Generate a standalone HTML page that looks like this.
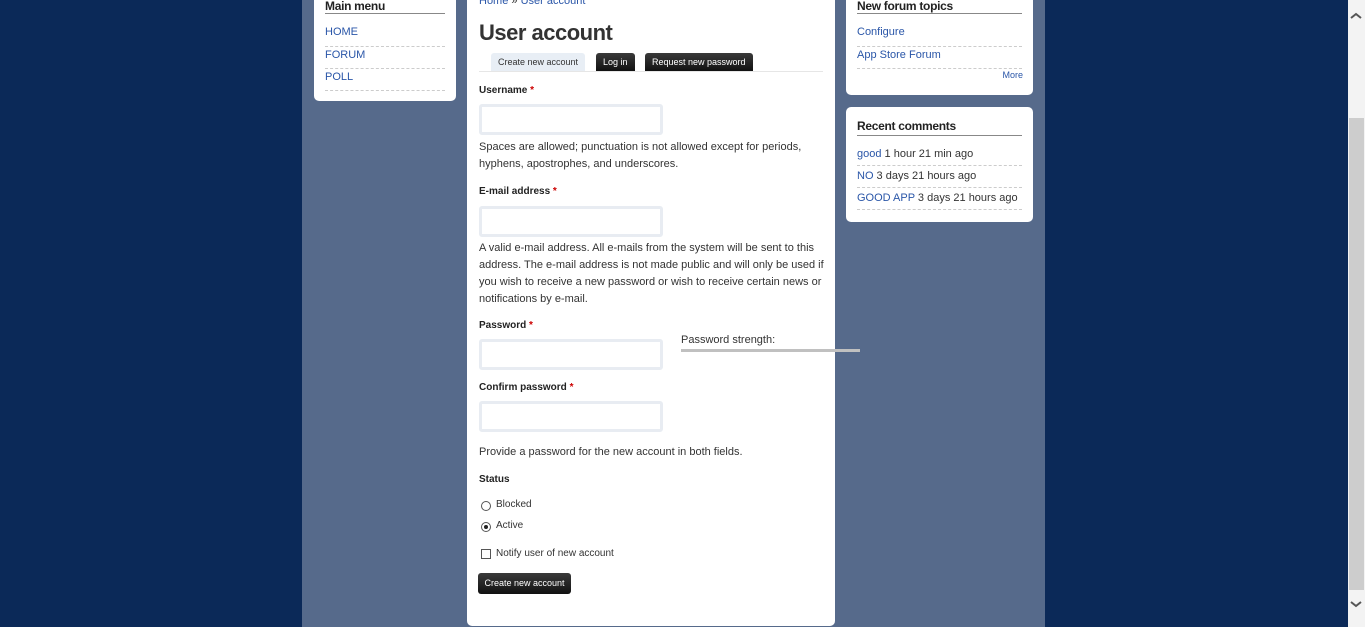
<!DOCTYPE html>
<html><head><meta charset="utf-8"><style>
*{margin:0;padding:0;box-sizing:border-box}
body{width:1365px;height:627px;overflow:hidden;background:#0b2958;font-family:"Liberation Sans",sans-serif;font-size:11px;color:#333;position:relative}
.col{position:absolute;left:302px;top:0;width:743px;height:627px;background:#566a8b}
.box{position:absolute;background:#fff;border-radius:5px}
a{color:#2a56a8;text-decoration:none}
.abs{position:absolute;white-space:nowrap}
h2{font-size:12px;font-weight:bold;color:#222;letter-spacing:-0.3px}
.li{position:absolute;left:0;right:0;border-bottom:1px dashed #ccc;font-size:11px;padding-top:2px}
.lab{position:absolute;left:479px;font-weight:bold;font-size:10px;color:#222}
.lab i{color:#c00;font-style:normal}
.in{position:absolute;left:479px;width:184px;height:31px;border:3px solid #e8ecf2;border-radius:3px;background:#fff}
.desc{position:absolute;left:479px;font-size:11px;line-height:17px;color:#333}
.tab{position:absolute;top:53px;height:18px;font-size:9px;line-height:18px;padding:0 7px;border-radius:3px 3px 0 0}
.dark{background:linear-gradient(#3a3a3a,#111);color:#fff}
</style></head><body>
<div class="col"></div>
<div class="box" style="left:314px;top:-6px;width:142px;height:107px">
 <div class="abs" style="left:11px;top:5px;width:120px;border-bottom:1px solid #888;height:15px"><h2>Main menu</h2></div>
 <div class="abs" style="left:11px;top:30px;width:120px">
  <div class="li" style="top:0;height:23px"><a>HOME</a></div>
  <div class="li" style="top:23px;height:22px"><a>FORUM</a></div>
  <div class="li" style="top:45px;height:22px"><a>POLL</a></div>
 </div>
</div>
<div class="box" style="left:467px;top:-6px;width:368px;height:632px;border-radius:0 0 5px 5px"></div>
<div class="abs" style="left:479px;top:-5px;font-size:11px"><a>Home</a> » <a>User account</a></div>
<div class="abs" style="left:479px;top:20px;font-size:22px;font-weight:bold;color:#333;letter-spacing:-0.5px">User account</div>
<div class="abs" style="left:479px;top:71px;width:344px;border-top:1px solid #e6e6e6"></div>
<div class="tab" style="left:491px;background:#e8eef5;color:#333">Create new account</div>
<div class="tab dark" style="left:596px">Log in</div>
<div class="tab dark" style="left:645px">Request new password</div>
<div class="lab" style="top:85px">Username <i>*</i></div>
<div class="in" style="top:104px"></div>
<div class="desc" style="top:139px">Spaces are allowed; punctuation is not allowed except for periods,<br>hyphens, apostrophes, and underscores.</div>
<div class="lab" style="top:186px">E-mail address <i>*</i></div>
<div class="in" style="top:206px"></div>
<div class="desc" style="top:240px">A valid e-mail address. All e-mails from the system will be sent to this<br>address. The e-mail address is not made public and will only be used if<br>you wish to receive a new password or wish to receive certain news or<br>notifications by e-mail.</div>
<div class="lab" style="top:320px">Password <i>*</i></div>
<div class="in" style="top:339px"></div>
<div class="abs" style="left:681px;top:334px;font-size:11px">Password strength:</div>
<div class="abs" style="left:681px;top:349px;width:179px;height:3px;background:#c0c0c0"></div>
<div class="lab" style="top:382px">Confirm password <i>*</i></div>
<div class="in" style="top:401px"></div>
<div class="desc" style="top:444px">Provide a password for the new account in both fields.</div>
<div class="lab" style="top:474px">Status</div>
<div class="abs" style="left:481px;top:501px;width:10px;height:10px;border:1px solid #555;border-radius:50%"></div>
<div class="abs" style="left:496px;top:499px;font-size:10px">Blocked</div>
<div class="abs" style="left:481px;top:522px;width:10px;height:10px;border:1px solid #555;border-radius:50%"><div style="width:4px;height:4px;background:#222;border-radius:50%;margin:2px"></div></div>
<div class="abs" style="left:496px;top:520px;font-size:10px">Active</div>
<div class="abs" style="left:481px;top:549px;width:10px;height:10px;border:1px solid #555"></div>
<div class="abs" style="left:496px;top:548px;font-size:10px">Notify user of new account</div>
<div class="abs dark" style="left:478px;top:573px;width:93px;height:21px;border-radius:3px;font-size:9px;line-height:21px;text-align:center">Create new account</div>
<div class="box" style="left:846px;top:-6px;width:187px;height:101px">
 <div class="abs" style="left:11px;top:5px;width:165px;border-bottom:1px solid #888;height:15px"><h2>New forum topics</h2></div>
 <div class="abs" style="left:11px;top:30px;width:165px">
  <div class="li" style="top:0;height:23px"><a>Configure</a></div>
  <div class="li" style="top:23px;height:22px"><a>App Store Forum</a></div>
 </div>
 <div class="abs" style="right:10px;top:76px;font-size:9px"><a>More</a></div>
</div>
<div class="box" style="left:846px;top:107px;width:187px;height:115px">
 <div class="abs" style="left:11px;top:12px;width:165px;border-bottom:1px solid #888;height:17px"><h2>Recent comments</h2></div>
 <div class="abs" style="left:11px;top:40px;width:165px">
  <div class="li" style="top:0;height:19px;padding-top:1px"><a>good</a> 1 hour 21 min ago</div>
  <div class="li" style="top:19px;height:22px;padding-top:4px"><a>NO</a> 3 days 21 hours ago</div>
  <div class="li" style="top:41px;height:22px;padding-top:4px"><a>GOOD APP</a> 3 days 21 hours ago</div>
 </div>
</div>
<div class="abs" style="left:1348px;top:0;width:17px;height:627px;background:#f3f3f3"></div>
<div class="abs" style="left:1349px;top:118px;width:15px;height:472px;background:#cdcdcd"></div>
<svg class="abs" style="left:1350px;top:12px" width="12" height="8"><path d="M1 6 L6 2 L11 6" stroke="#555" stroke-width="2" fill="none"/></svg>
<svg class="abs" style="left:1350px;top:600px" width="12" height="8"><path d="M1 2 L6 6 L11 2" stroke="#555" stroke-width="2" fill="none"/></svg>
</body></html>
